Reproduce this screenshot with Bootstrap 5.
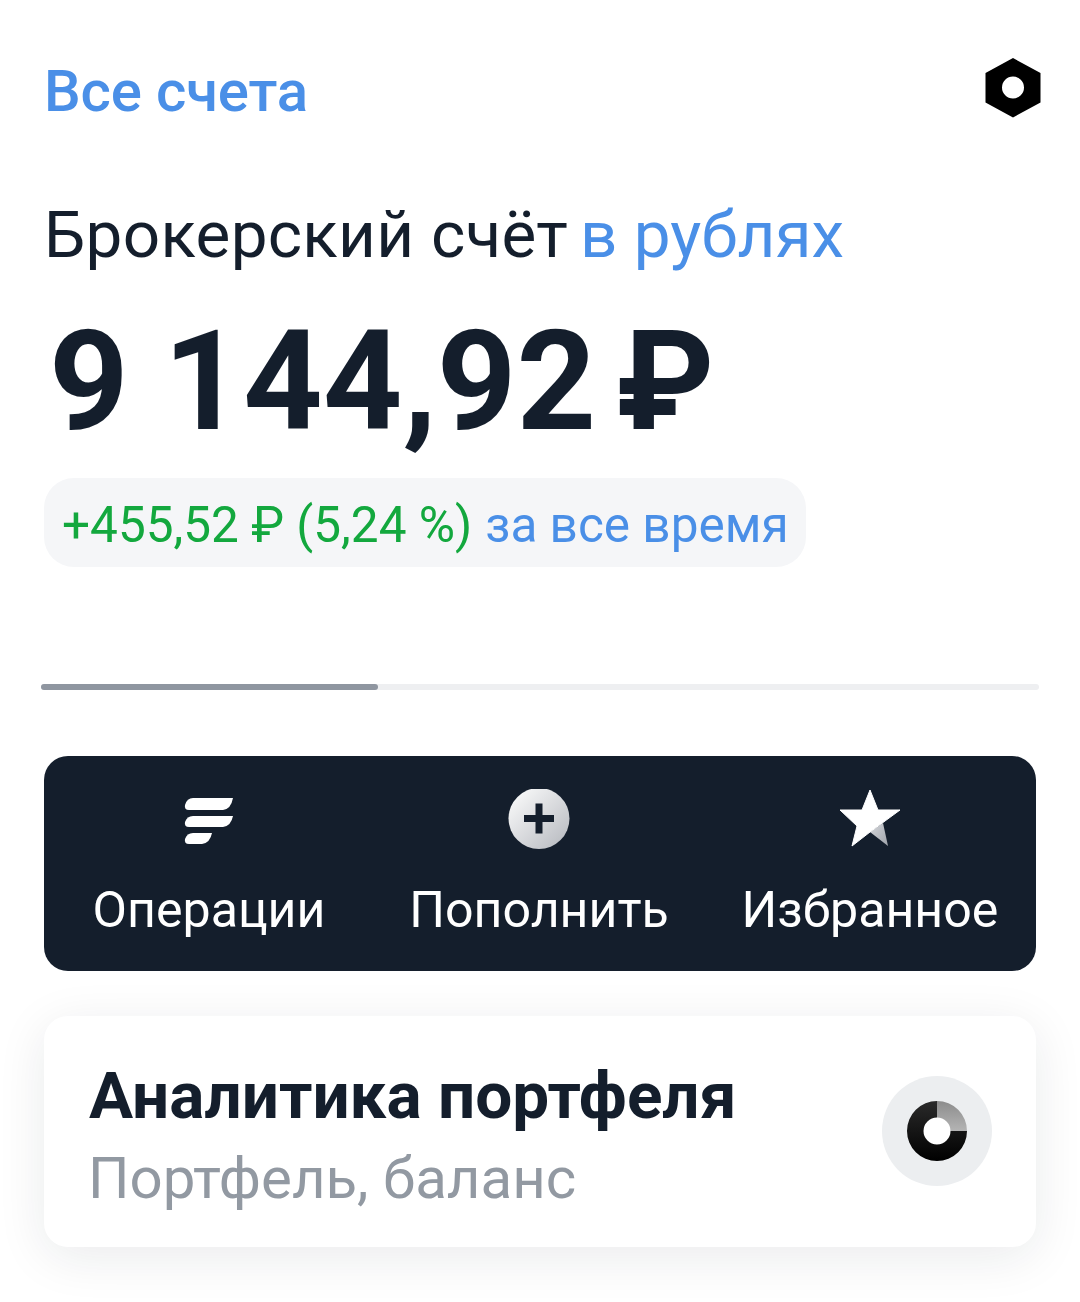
<!DOCTYPE html>
<html lang="ru">
<head>
<meta charset="utf-8">
<title>Брокерский счёт</title>
<link href="https://cdn.jsdelivr.net/npm/bootstrap@5.3.0/dist/css/bootstrap.min.css" rel="stylesheet">
<style>
html,body{background:#fff;margin:0;overflow:hidden}
body{font-family:Roboto,"Noto Sans",sans-serif;color:#141e2c;height:1302px}
.app-screen{padding:0 44px;height:1302px;overflow:hidden}
.top-bar{height:64px;margin-top:60px}
.all-accounts{font-size:58.2px;font-weight:500;color:#4a8fe7;line-height:64px;letter-spacing:-.2px;margin-top:-2px}
.nut{width:58px;height:63px;margin-right:-6px;margin-top:-9px}
.acc-title{font-size:65.6px;line-height:70px;margin-top:76px;white-space:nowrap;letter-spacing:.27px}
.acc-title span{color:#4a8fe7;margin-left:12px;letter-spacing:0}
.balance{font-size:139px;font-weight:700;line-height:130px;margin-top:47px;margin-left:5px;white-space:nowrap;color:#141e2c}
.balance span{margin-left:20px}
.yield-pill{display:inline-flex;align-items:center;height:89px;margin-top:31px;padding:6px 17px 0 18px;background:#f5f6f8;border-radius:30px;font-size:49.5px;white-space:nowrap}
.yield-pill b{font-weight:400;color:#13a83e}
.yield-pill span{color:#4a8fe7;margin-left:13px}
.slider-track{height:6px;background:#eeeff1;border-radius:3px;margin:117px 0 0 -3px;width:998px}
.slider-fill{height:6px;width:337px;background:#8f96a0;border-radius:3px}
.act-panel{background:#141e2c;border-radius:24px;height:215px;margin-top:66px;width:992px}
.act-item{color:#fff;font-size:50.1px;line-height:56px;white-space:nowrap}
.act-item svg{width:64px;height:64px;margin-bottom:29px;display:block}
.act-1{width:330px}
.act-2{width:330px}
.act-3{width:332px}
.analytic-card{width:992px;height:231px;margin-top:45px;border-radius:24px;background:#fff;box-shadow:0 10px 50px rgba(20,30,44,.09);padding:0 44px 0 45px}
.analytic-copy{padding-top:6px}
.analytic-title{font-size:65.7px;font-weight:700;line-height:72px;white-space:nowrap}
.analytic-sub{font-size:58.2px;line-height:64px;color:#9299a2;margin-top:14px;margin-left:-1px;white-space:nowrap}
.round-ico{width:110px;height:110px;border-radius:50%;background:#eceef0;margin-top:-1px}
.round-ico svg{width:64px;height:64px}
</style>
</head>
<body>
<main class="app-screen">
  <div class="top-bar d-flex justify-content-between align-items-center">
    <div class="all-accounts">Все счета</div>
    <svg class="nut" viewBox="0 0 58 62"><path fill-rule="evenodd" fill="#000" d="M29 1.500 56.500 16.500V46L29 61 1.500 46V16.500ZM29 20a11 11 0 1 0 0 22 11 11 0 0 0 0-22Z"/></svg>
  </div>
  <div class="acc-title">Брокерский счёт<span>в рублях</span></div>
  <div class="balance">9 144,92<span>₽</span></div>
  <div class="yield-pill"><b>+455,52 ₽ (5,24 %)</b><span>за все время</span></div>
  <div class="slider-track"><div class="slider-fill"></div></div>
  <div class="act-panel d-flex align-items-stretch">
    <div class="act-item act-1 d-flex flex-column align-items-center justify-content-center">
      <svg viewBox="0 0 64 64"><g fill="#fff"><path d="M16 9H56Q54 20 46 21H12Q7 21 8 16 10 9 16 9Z"/><path d="M16 27H56Q54 37 46 38H12Q7 38 8 33 10 27 16 27Z"/><path d="M16 44H35Q33 54 25 55H12Q7 55 8 50 10 44 16 44Z"/></g></svg>
      <div>Операции</div>
    </div>
    <div class="act-item act-2 d-flex flex-column align-items-center justify-content-center">
      <svg viewBox="0 0 64 64"><defs><linearGradient id="pg" x1="0" y1="0" x2="1" y2="1"><stop offset="0" stop-color="#fff"/><stop offset="1" stop-color="#b4b7bd"/></linearGradient></defs><circle cx="32" cy="29.500" r="30.500" fill="url(#pg)"/><path fill="#141e2c" d="M28.500 14.500h7v11.500h11.500v7H35.500v11.500h-7V33H17v-7h11.500Z"/></svg>
      <div>Пополнить</div>
    </div>
    <div class="act-item act-3 d-flex flex-column align-items-center justify-content-center">
      <svg viewBox="0 0 64 64"><defs><linearGradient id="sg" x1="0" y1="0" x2="1" y2="1"><stop offset="0" stop-color="#d5d7db"/><stop offset="1" stop-color="#9fa3aa"/></linearGradient></defs><path fill="url(#sg)" d="M32 43 45 34 50 57Z"/><path fill="#fff" stroke="#fff" stroke-width="1" stroke-linejoin="round" d="M32 1 40 21H62L32 43 14 57 19 37 2 21H24Z"/></svg>
      <div>Избранное</div>
    </div>
  </div>
  <div class="analytic-card d-flex justify-content-between align-items-center">
    <div class="analytic-copy">
      <div class="analytic-title">Аналитика портфеля</div>
      <div class="analytic-sub">Портфель, баланс</div>
    </div>
    <div class="round-ico d-flex align-items-center justify-content-center">
      <svg viewBox="0 0 64 64"><defs><linearGradient id="dg" x1="0" y1="0" x2="0" y2="1"><stop offset="0" stop-color="#2a2a2a"/><stop offset="1" stop-color="#000"/></linearGradient><linearGradient id="gg" x1="0" y1="0" x2="0" y2="1"><stop offset="0" stop-color="#8c8c8c"/><stop offset="1" stop-color="#b4b4b4"/></linearGradient></defs><circle cx="32" cy="32" r="14" fill="#fff"/><path fill="url(#dg)" d="M32 2V18.500A13.500 13.500 0 1 0 45.500 32H62A30 30 0 1 1 32 2Z"/><path fill="url(#gg)" d="M32 2A30 30 0 0 1 62 32H45.500A13.500 13.500 0 0 0 32 18.500Z"/></svg>
    </div>
  </div>
</main>
</body>
</html>
